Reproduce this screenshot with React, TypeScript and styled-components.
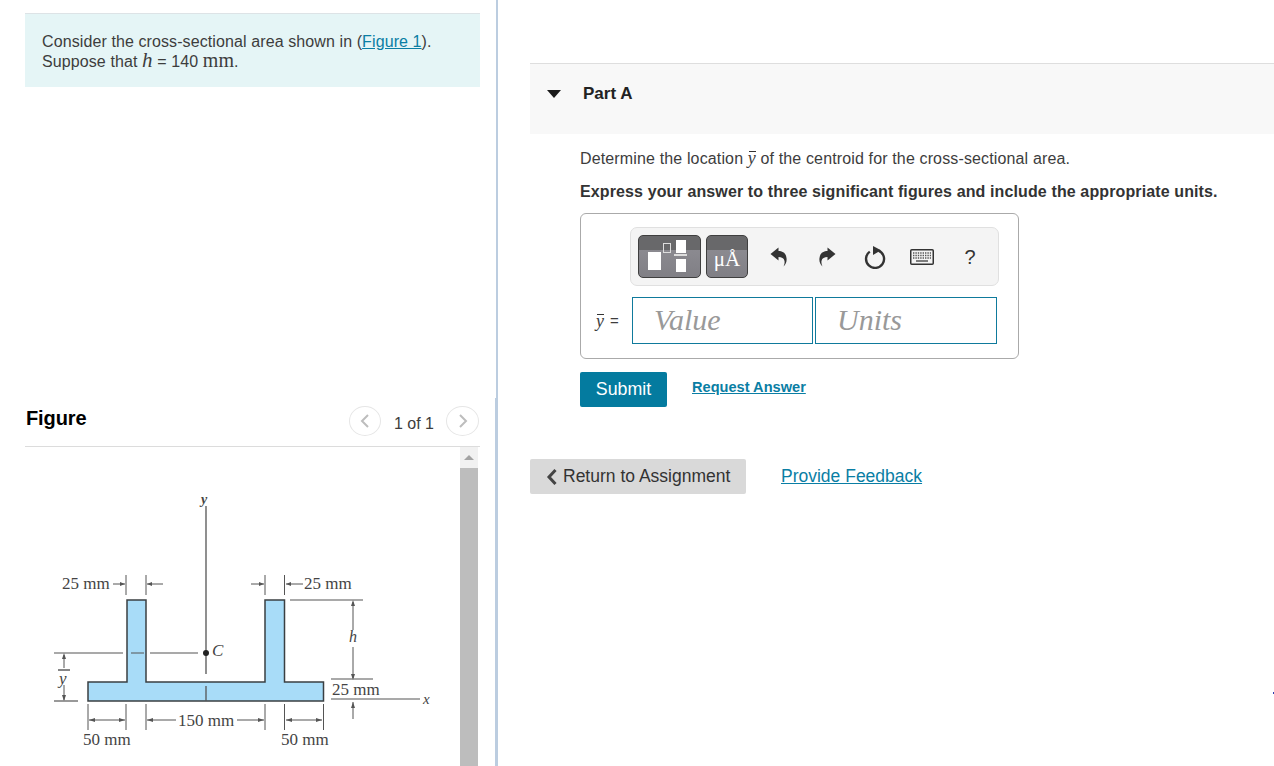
import React from "react";
import styled, { createGlobalStyle } from "styled-components";

const GlobalStyle = createGlobalStyle`
  html, body {
    margin: 0;
    padding: 0;
    height: 100%;
    overflow: hidden;
    background: #fff;
    font-family: "Liberation Sans", Arial, sans-serif;
    font-size: 16px;
    color: #333;
  }
`;

const Page = styled.div`
  display: flex;
  width: 1274px;
  height: 766px;
  overflow: hidden;
`;

const LeftPane = styled.div`
  width: 496px;
  flex: none;
  padding: 13px 16px 0 25px;
  box-sizing: border-box;
  display: flex;
  flex-direction: column;
`;

const Divider = styled.div`
  position: relative;
  width: 2px;
  flex: none;
  background: #bccde0;
  &::before {
    content: "";
    position: absolute;
    left: -1px;
    top: 398px;
    bottom: 0;
    width: 1px;
    background: #bccde0;
  }
`;

const RightPane = styled.div`
  flex: 1;
  min-width: 0;
  padding: 63px 0 0 32px;
`;

const Note = styled.div`
  flex: none;
  height: 74px;
  box-sizing: border-box;
  padding: 18px 17px 0;
  background: #e5f5f6;
  border-top: 1px solid #dde3e6;
  line-height: 20px;
  letter-spacing: 0.1px;
  color: #3d3d3d;
`;

const Link = styled.a`
  color: #0a7ea4;
  text-decoration: underline;
`;

const MathVar = styled.span`
  font-family: "Liberation Serif", serif;
  font-style: italic;
  font-size: 21px;
  line-height: 0;
`;

const MathUnit = styled.span`
  font-family: "Liberation Serif", serif;
  font-size: 20px;
  line-height: 0;
`;

const FigureHead = styled.div`
  flex: none;
  margin-top: 317px;
  height: 43px;
  box-sizing: border-box;
  border-bottom: 1px solid #dcdcdc;
  display: flex;
  align-items: flex-start;
  justify-content: space-between;
`;

const FigureTitle = styled.div`
  font-size: 20px;
  font-weight: 700;
  color: #000;
  margin-left: 1px;
  margin-top: 3px;
  letter-spacing: -0.1px;
`;

const Pager = styled.div`
  display: flex;
  align-items: center;
  gap: 13px;
  margin: 2px 1px 0 0;
  font-size: 16px;
  color: #3d3d3d;
`;

const PagerCount = styled.span`
  padding-top: 6px;
  margin-right: -1px;
`;

const PagerButton = styled.div<{ $width: number }>`
  width: ${(p) => p.$width}px;
  height: 30px;
  box-sizing: border-box;
  border: 1px solid #e6e6e6;
  border-radius: 50%;
  display: flex;
  align-items: center;
  justify-content: center;
  background: #fff;
`;

const FigureBody = styled.div`
  flex: none;
  display: flex;
  height: 320px;
`;

const FigureCanvas = styled.div`
  flex: 1;
  min-width: 0;
`;

const ScrollBar = styled.div`
  width: 18px;
  margin-right: 2px;
  display: flex;
  flex-direction: column;
  background: #f1f1f1;
`;

const ScrollArrow = styled.div`
  height: 21px;
  display: flex;
  align-items: center;
  justify-content: center;
  &::before {
    content: "";
    border-left: 5px solid transparent;
    border-right: 5px solid transparent;
    border-bottom: 5px solid #a3a3a3;
  }
`;

const ScrollThumb = styled.div`
  flex: 1;
  background: #bdbdbd;
`;

const PartHead = styled.div`
  height: 71px;
  box-sizing: border-box;
  border-top: 1px solid #dedede;
  background: #f8f8f8;
  display: flex;
  align-items: flex-start;
  padding: 20px 0 0 17px;
  font-size: 17px;
  font-weight: 700;
  color: #222;
`;

const Caret = styled.span`
  width: 0;
  height: 0;
  margin: 6px 22px 0 0;
  border-left: 7px solid transparent;
  border-right: 7px solid transparent;
  border-top: 8px solid #1a1a1a;
`;

const PartBody = styled.div`
  padding: 15px 0 0 50px;
`;

const Prompt = styled.p`
  margin: 0;
  line-height: 20px;
  letter-spacing: 0.14px;
  color: #3d3d3d;
`;

const Instruction = styled.p`
  margin: 13px 0 0;
  line-height: 20px;
  letter-spacing: 0.12px;
  font-weight: 700;
  color: #333;
`;

const YBar = styled.span`
  position: relative;
  display: inline-block;
  font-family: "Liberation Serif", serif;
  font-style: italic;
  font-size: 18px;
  line-height: 1;
  &::before {
    content: "";
    position: absolute;
    left: 1px;
    right: 0;
    top: 2px;
    height: 1px;
    background: #333;
  }
`;

const AnswerBox = styled.div`
  width: 439px;
  height: 146px;
  margin-top: 11px;
  box-sizing: border-box;
  border: 1px solid #aaa;
  border-radius: 6px;
  padding: 13px 0 0 49px;
`;

const Toolbar = styled.div`
  width: 369px;
  height: 59px;
  box-sizing: border-box;
  border: 1px solid #e0e0e0;
  border-radius: 7px;
  background: #f4f4f4;
  display: flex;
  align-items: center;
  padding: 0 7px;
`;

const PaletteButton = styled.div<{ $width: number }>`
  position: relative;
  width: ${(p) => p.$width}px;
  height: 43px;
  box-sizing: border-box;
  flex: none;
  margin-right: 5px;
  border: 1px solid #3f3f3f;
  border-radius: 5px;
  background: linear-gradient(#68686a 0, #68686a 34%, #8b8a90 34%, #807f85 100%);
  overflow: hidden;
`;

const ToolIcon = styled.div<{ $left: number }>`
  width: 30px;
  height: 30px;
  margin-left: ${(p) => p.$left}px;
  flex: none;
  display: flex;
  align-items: center;
  justify-content: center;
  color: #333;
  font-size: 20px;
`;

const AnswerRow = styled.div`
  display: flex;
  align-items: center;
  margin-top: 11px;
  margin-left: -35px;
`;

const AnswerLabel = styled.div`
  width: 37px;
  flex: none;
  box-sizing: border-box;
  padding-left: 1px;
  display: flex;
  align-items: center;
  gap: 6px;
  font-size: 15px;
  color: #3d3d3d;
`;

const AnswerInput = styled.input<{ $width: number }>`
  width: ${(p) => p.$width}px;
  height: 47px;
  box-sizing: border-box;
  margin: 0 2px 0 0;
  padding: 0 0 2px 21px;
  border: 1px solid #0f7a9c;
  border-radius: 0;
  outline: none;
  font-family: "Liberation Serif", serif;
  font-style: italic;
  font-size: 30px;
  &::placeholder {
    color: #999;
    opacity: 1;
  }
`;

const Actions = styled.div`
  display: flex;
  align-items: flex-start;
  margin-top: 13px;
`;

const SubmitButton = styled.button`
  width: 87px;
  height: 35px;
  padding: 0;
  border: 0;
  border-radius: 2px;
  background: #047b9f;
  color: #fff;
  font: 400 17.8px "Liberation Sans", Arial, sans-serif;
`;

const RequestLink = styled(Link)`
  margin: 7px 0 0 25px;
  font-size: 14.6px;
  font-weight: 700;
`;

const Footer = styled.div`
  display: flex;
  align-items: center;
  margin-top: 52px;
`;

const ReturnButton = styled.div`
  width: 216px;
  height: 35px;
  box-sizing: border-box;
  padding-left: 16px;
  display: flex;
  align-items: center;
  gap: 5px;
  background: #d9d9d9;
  border-radius: 2px;
  font-size: 17.5px;
  color: #333;
`;

const FeedbackLink = styled(Link)`
  margin-left: 35px;
  font-size: 17.5px;
`;

const EdgeMark = styled.div`
  position: absolute;
  left: 1273px;
  top: 692px;
  width: 1px;
  height: 2px;
  background: #2a3fb0;
`;

const Chevron = ({ dir }: { dir: "left" | "right" }) => (
  <svg width="10" height="16" viewBox="0 0 10 16">
    <path
      d={dir === "left" ? "M8 2 2 8l6 6" : "M2 2l6 6-6 6"}
      fill="none"
      stroke="#bdbdbd"
      strokeWidth="2"
    />
  </svg>
);

// white placeholder boxes of the templates button
const TemplatesIcon = () => (
  <svg width="62" height="41" viewBox="0 0 62 41" style={{ display: "block" }}>
    <rect x="9" y="16" width="13" height="18" fill="#fff" />
    <rect x="24.500" y="7.500" width="7" height="9" fill="none" stroke="#ddd" />
    <rect x="37" y="4" width="10" height="13" fill="#fff" />
    <rect x="35" y="18" width="13" height="2" fill="#ddd" />
    <rect x="37" y="23" width="10" height="13" fill="#fff" />
  </svg>
);

const MicroIcon = styled.div`
  position: absolute;
  inset: 7px 0 0 0;
  text-align: center;
  color: #fff;
  font-family: "Liberation Serif", serif;
  font-size: 21px;
  line-height: 32px;
`;

const undoPath = "M9.500 .5 1.500 7l8 6.500V10c3 0 5.500 1 6 4 .3 2-.2 4-1 5.500 2.500-2 3.500-5.500 3-8.500C17 6 13.500 4 9.500 4z";

const UndoIcon = () => (
  <svg width="20" height="20" viewBox="0 0 20 20">
    <path d={undoPath} fill="#333" />
  </svg>
);

const RedoIcon = () => (
  <svg width="20" height="20" viewBox="0 0 20 20">
    <path d={undoPath} fill="#333" transform="matrix(-1 0 0 1 20 0)" />
  </svg>
);

const ResetIcon = () => (
  <svg width="24" height="24" viewBox="0 0 24 24">
    <path d="M6.800 6.600a9 9 0 1 0 8.700-1" fill="none" stroke="#333" strokeWidth="2.400" />
    <path d="M10 1v9l8-4.700z" fill="#333" />
  </svg>
);

const KeyboardIcon = () => (
  <svg width="24" height="16" viewBox="0 0 24 16">
    <rect x=".75" y=".75" width="22.500" height="14.500" rx="1" fill="#f4f4f4" stroke="#333" strokeWidth="1.500" />
    <path d="M3 4h18M3 6.500h18M3 9h18" stroke="#555" strokeWidth="1.300" strokeDasharray="1.400 1" />
    <path d="M6 12h12" stroke="#555" strokeWidth="1.500" />
  </svg>
);

const HelpMark = styled.span`
  margin: 1px 0 0 2px;
`;

const Arrow = ({ d }: { d: string }) => <path d={d} fill="#555" />;

// the textbook figure: T-section with dimension lines
const SectionFigure = () => (
  <svg width="435" height="320" viewBox="25 447 435 320" style={{ display: "block" }}>
    <path
      d="M127 600H146V682H265V600H284.500V682H323.500V701H88V682H127Z"
      fill="#a8dcf8"
      stroke="#3a3f42"
      strokeWidth="1.500"
    />
    <g stroke="#555" strokeWidth="1" fill="none">
      <path d="M206 506V674M206 686V701" strokeWidth="1.300" />
      <path d="M126 575V595M146 575V595M265 575V595M284.500 575V595" />
      <path d="M113 584H125M147 584H163M251 584H264M286 584H303" />
      <path d="M54 653H123M131 653H144M150 653H198" strokeWidth="1.200" />
      <path d="M54 701H78" strokeWidth="1.200" />
      <path d="M64 655V668M64 685V700" />
      <path d="M290 600H363M331 679H373" strokeWidth="1.200" />
      <path d="M353 602V630M353 647V678" />
      <path d="M331 699H420" strokeWidth="1.200" />
      <path d="M353 702V719" />
      <path d="M88 704V730M126 704V730M146 704V730M265 704V730M284.500 704V730M323.500 704V730" />
      <path d="M89 720H125M147 720H176M237 720H264M286 720H322" />
    </g>
    <g>
      <Arrow d="M125 584l-5-2v4zM147 584l5-2v4zM264 584l-5-2v4zM286 584l5-2v4z" />
      <Arrow d="M64 653l-2 6h4zM64 701l-2-6h4zM353 600l-2 6h4zM353 680l-2-6h4zM353 702l-2 6h4z" />
      <Arrow d="M89 720l6-2v4zM125 720l-6-2v4zM147 720l6-2v4zM264 720l-6-2v4zM286 720l6-2v4zM322 720l-6-2v4z" />
    </g>
    <circle cx="206" cy="653" r="3" fill="#222" />
    <g fontFamily="'Liberation Serif', serif" fontSize="17" fill="#444">
      <text x="62" y="589">25 mm</text>
      <text x="304" y="589">25 mm</text>
      <text x="332" y="695">25 mm</text>
      <text x="178" y="726">150 mm</text>
      <text x="83" y="745">50 mm</text>
      <text x="281" y="745">50 mm</text>
      <g fontStyle="italic">
        <text x="201" y="504" fontWeight="700" fontSize="14">y</text>
        <text x="212" y="656">C</text>
        <text x="349" y="642" fontSize="16">h</text>
        <text x="423" y="704" fontSize="15">x</text>
        <text x="59" y="684">y</text>
      </g>
    </g>
    <path d="M58 670H70" stroke="#444" strokeWidth="1.300" />
  </svg>
);

export default function App() {
  return (
    <Page>
      <GlobalStyle />
      <LeftPane>
        <Note>
          Consider the cross-sectional area shown in (<Link href="#">Figure 1</Link>).
          <br />
          Suppose that <MathVar>h</MathVar> = 140 <MathUnit>mm</MathUnit>.
        </Note>
        <FigureHead>
          <FigureTitle>Figure</FigureTitle>
          <Pager>
            <PagerButton $width={32}>
              <Chevron dir="left" />
            </PagerButton>
            <PagerCount>1 of 1</PagerCount>
            <PagerButton $width={33}>
              <Chevron dir="right" />
            </PagerButton>
          </Pager>
        </FigureHead>
        <FigureBody>
          <FigureCanvas>
            <SectionFigure />
          </FigureCanvas>
          <ScrollBar>
            <ScrollArrow />
            <ScrollThumb />
          </ScrollBar>
        </FigureBody>
      </LeftPane>
      <Divider />
      <RightPane>
        <PartHead>
          <Caret />
          Part A
        </PartHead>
        <PartBody>
          <Prompt>
            Determine the location <YBar>y</YBar> of the centroid for the cross-sectional area.
          </Prompt>
          <Instruction>Express your answer to three significant figures and include the appropriate units.</Instruction>
          <AnswerBox>
            <Toolbar>
              <PaletteButton $width={63}>
                <TemplatesIcon />
              </PaletteButton>
              <PaletteButton $width={42}>
                <MicroIcon>μÅ</MicroIcon>
              </PaletteButton>
              <ToolIcon $left={11}>
                <UndoIcon />
              </ToolIcon>
              <ToolIcon $left={18}>
                <RedoIcon />
              </ToolIcon>
              <ToolIcon $left={18}>
                <ResetIcon />
              </ToolIcon>
              <ToolIcon $left={17}>
                <KeyboardIcon />
              </ToolIcon>
              <ToolIcon $left={17}>
                <HelpMark>?</HelpMark>
              </ToolIcon>
            </Toolbar>
            <AnswerRow>
              <AnswerLabel>
                <YBar>y</YBar>
                <span>=</span>
              </AnswerLabel>
              <AnswerInput $width={181} placeholder="Value" />
              <AnswerInput $width={182} placeholder="Units" />
            </AnswerRow>
          </AnswerBox>
          <Actions>
            <SubmitButton>Submit</SubmitButton>
            <RequestLink href="#">Request Answer</RequestLink>
          </Actions>
        </PartBody>
        <Footer>
          <ReturnButton>
            <svg width="12" height="18" viewBox="0 0 12 18">
              <path d="M9.500 2 3 9l6.500 7" fill="none" stroke="#444" strokeWidth="3" />
            </svg>
            Return to Assignment
          </ReturnButton>
          <FeedbackLink href="#">Provide Feedback</FeedbackLink>
        </Footer>
      </RightPane>
      <EdgeMark />
    </Page>
  );
}
